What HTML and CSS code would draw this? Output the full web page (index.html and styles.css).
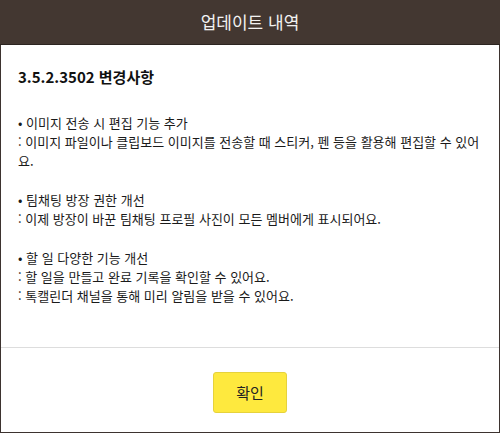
FILE: index.html
```html
<!DOCTYPE html>
<html lang="ko">
<head>
<meta charset="utf-8">
<title>업데이트 내역</title>
<link rel="stylesheet" href="styles.css">
</head>
<body>
<div class="dialog">
  <header class="dialog-header">업데이트 내역</header>
  <main class="dialog-body">
    <h1 class="version">3.5.2.3502 변경사항</h1>
    <p class="note">• 이미지 전송 시 편집 기능 추가<br>: 이미지 파일이나 클립보드 이미지를 전송할 때 스티커, 펜 등을 활용해 편집할 수 있어요.</p>
    <p class="note">• 팀채팅 방장 권한 개선<br>: 이제 방장이 바꾼 팀채팅 프로필 사진이 모든 멤버에게 표시되어요.</p>
    <p class="note">• 할 일 다양한 기능 개선<br>: 할 일을 만들고 완료 기록을 확인할 수 있어요.<br>: 톡캘린더 채널을 통해 미리 알림을 받을 수 있어요.</p>
  </main>
  <footer class="dialog-footer">
    <button class="confirm" type="button">확인</button>
  </footer>
</div>
</body>
</html>
```
FILE: styles.css
```css
html, body {
  margin: 0;
  padding: 0;
  background: #ffffff;
}
body {
  font-family: "Noto Sans CJK KR", "Noto Sans", sans-serif;
}
.dialog {
  box-sizing: border-box;
  width: 500px;
  height: 433px;
  border: 1px solid #3d332f;
  border-top: none;
  display: flex;
  flex-direction: column;
  background: #ffffff;
}
.dialog-header {
  height: 44px;
  border-bottom: 1px solid #2c2420;
  background: #433731;
  color: #f2f2f2;
  font-size: 17px;
  line-height: 44px;
  text-align: center;
  margin: 0 -1px;
}
.dialog-body {
  flex: 1;
  padding: 22px 10px 0 17px;
  color: #1a1a1a;
}
.version {
  margin: 0 0 26px;
  font-size: 15px;
  line-height: 20px;
  font-weight: bold;
  color: #111111;
}
.note {
  margin: 0 0 19.5px;
  font-size: 13px;
  line-height: 19.2px;
}
.dialog-footer {
  border-top: 1px solid #dddddd;
  height: 85px;
  box-sizing: border-box;
  padding-top: 24px;
  display: flex;
  justify-content: center;
  align-items: flex-start;
}
.confirm {
  width: 74px;
  height: 41px;
  background: #fee93e;
  border: 1px solid #e6d23c;
  border-radius: 3px;
  font-family: "Noto Sans CJK KR", "Noto Sans", sans-serif;
  font-size: 15px;
  color: #222222;
  padding: 0;
}
```
